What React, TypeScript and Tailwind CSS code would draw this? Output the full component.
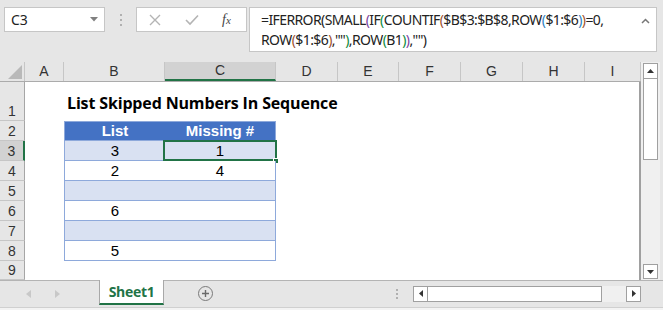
import React from "react";

const cols = [
  { l: "A", w: "w-[39px]" },
  { l: "B", w: "w-[101px]" },
  { l: "C", w: "w-[111px]" },
  { l: "D", w: "w-[62px]" },
  { l: "E", w: "w-[61px]" },
  { l: "F", w: "w-[62px]" },
  { l: "G", w: "w-[62px]" },
  { l: "H", w: "w-[62px]" },
  { l: "I", w: "w-[56px]" },
];

type TRow = { n: number; kind: "head" | "band" | "plain"; b: string; c: string };
const tableRows: TRow[] = [
  { n: 2, kind: "head", b: "List", c: "Missing #" },
  { n: 3, kind: "band", b: "3", c: "1" },
  { n: 4, kind: "plain", b: "2", c: "4" },
  { n: 5, kind: "band", b: "", c: "" },
  { n: 6, kind: "plain", b: "6", c: "" },
  { n: 7, kind: "band", b: "", c: "" },
  { n: 8, kind: "plain", b: "5", c: "" },
];

const P = ({ c, children }: { c: string; children: React.ReactNode }) => (
  <span className={c}>{children}</span>
);

function RowHead({ n, sel, h }: { n: number; sel?: boolean; h: string }) {
  return (
    <div
      className={
        sel
          ? `w-[25px] ${h} shrink-0 flex items-end justify-center pb-[0px] bg-[#d2d2d2] border-b border-[#c6c6c6] border-r-2 border-r-[#217346] text-[14px] leading-[18px] text-[#333]`
          : `w-[25px] ${h} shrink-0 flex items-end justify-center pb-[0px] bg-[#e6e6e6] border-b border-[#c6c6c6] border-r border-r-[#a6a6a6] text-[14px] leading-[18px] text-[#333]`
      }
    >
      {n}
    </div>
  );
}

function Filler() {
  return <div className="flex-1" />;
}

export default function App() {
  return (
    <div className="w-[663px] h-[310px] bg-[#e6e6e6] overflow-hidden flex flex-col font-['Liberation_Sans',Arial,sans-serif] text-[#000]">
      {/* toolbar */}
      <div className="h-[62px] shrink-0 flex items-start pt-[7px] pl-[4px]">
        <div className="w-[101px] h-[25px] bg-white border border-[#c6c6c6] flex items-center justify-between pl-[6px] pr-[6px]">
          <span className="text-[14px] text-[#222] font-['Noto_Sans',sans-serif]">C3</span>
          <svg width="8" height="5" viewBox="0 0 8 5">
            <polygon points="0,0 8,0 4,4.5" fill="#808080" />
          </svg>
        </div>
        <div className="w-[31px] h-[25px] flex flex-col items-center justify-center gap-[3px]">
          <div className="w-[2px] h-[2px] bg-[#b0b0b0]" />
          <div className="w-[2px] h-[2px] bg-[#b0b0b0]" />
          <div className="w-[2px] h-[2px] bg-[#b0b0b0]" />
        </div>
        <div className="w-[111px] h-[25px] bg-white border border-[#c6c6c6] flex items-center">
          <svg width="12" height="12" viewBox="0 0 12 12" className="ml-[12px]">
            <path d="M1 1 L11 11 M11 1 L1 11" stroke="#b4b4b4" strokeWidth="1.4" />
          </svg>
          <svg width="14" height="12" viewBox="0 0 14 12" className="ml-[24px]">
            <path d="M1 6 L5 10 L13 1.5" stroke="#b4b4b4" strokeWidth="1.6" fill="none" />
          </svg>
          <span className="ml-[23px] text-[14px] italic text-[#444] font-['Liberation_Serif',serif]">
            f<span className="text-[11px]">x</span>
          </span>
        </div>
        <div className="ml-[2px] w-[408px] h-[45px] bg-white border border-[#c6c6c6] flex justify-between pl-[11px] pr-[6px] pt-[2px]">
          <div className="text-[14px] leading-[20px] text-[#222] font-['Noto_Sans',sans-serif] tracking-[-0.6px]">
            <div>
              =IFERROR<P c="">(</P>SMALL<P c="text-[#7b3fa0]">(</P>IF<P c="text-[#0f8a3c]">(</P>COUNTIF<P c="text-[#a0522d]">(</P>$B$3:$B$8,ROW<P c="text-[#2d7fc1]">(</P>$1:$6<P c="text-[#2d7fc1]">)</P><P c="text-[#a0522d]">)</P>=0,
            </div>
            <div>
              ROW<P c="text-[#a0522d]">(</P>$1:$6<P c="text-[#a0522d]">)</P>,""<P c="text-[#0f8a3c]">)</P>,ROW<P c="text-[#0f8a3c]">(</P>B1<P c="text-[#0f8a3c]">)</P><P c="text-[#7b3fa0]">)</P>,""<P c="">)</P>
            </div>
          </div>
          <svg width="9" height="6" viewBox="0 0 9 6" className="mt-[8px]">
            <path d="M1 5 L4.5 1.5 L8 5" stroke="#777" strokeWidth="1.5" fill="none" />
          </svg>
        </div>
      </div>

      {/* grid + vertical scrollbar */}
      <div className="h-[218px] shrink-0 flex">
        <div className="w-[641px] shrink-0 flex flex-col">
          {/* column headers */}
          <div className="h-[20px] flex border-b border-[#ababab]">
            <div className="w-[25px] shrink-0 bg-[#e6e6e6] border-r border-[#c6c6c6] flex items-end justify-end pr-[2px] pb-[2px]">
              <svg width="14" height="14" viewBox="0 0 14 14">
                <polygon points="14,0 14,14 0,14" fill="#b9b9b9" />
              </svg>
            </div>
            {cols.map((c) =>
              c.l === "C" ? (
                <div
                  key={c.l}
                  className={`${c.w} shrink-0 bg-[#d2d2d2] border-r border-[#c6c6c6] border-b-2 border-b-[#217346] flex items-center justify-center text-[14px] text-[#333]`}
                >
                  {c.l}
                </div>
              ) : (
                <div
                  key={c.l}
                  className={`${c.w} shrink-0 bg-[#e6e6e6] border-r border-[#c6c6c6] flex items-center justify-center text-[14px] text-[#333]`}
                >
                  {c.l}
                </div>
              )
            )}
          </div>

          {/* row 1 */}
          <div className="h-[39px] flex">
            <RowHead n={1} h="h-[39px]" />
            <div className="flex-1 bg-white border-r-2 border-[#a0a0a0] flex items-end pl-[42px] pb-[8px]">
              <span className="text-[16px] font-bold leading-[20px] tracking-[-0.15px] font-['Open_Sans',sans-serif]">
                List Skipped Numbers In Sequence
              </span>
            </div>
          </div>

          {/* table rows */}
          {tableRows.map((r) => {
            const bg =
              r.kind === "head"
                ? "bg-[#4472c4] text-white font-bold"
                : r.kind === "band"
                ? "bg-[#d9e1f2]"
                : "bg-white";
            return (
              <div key={r.n} className="h-[20px] flex">
                <RowHead n={r.n} h="h-[20px]" sel={r.n === 3} />
                <div className="flex-1 bg-white border-r-2 border-[#a0a0a0] flex">
                  <div className="w-[39px] shrink-0" />
                  <div
                    className={`w-[101px] shrink-0 ${bg} border-l border-b border-[#8ea9db] ${r.kind === "head" ? "border-t" : ""} flex items-center justify-center text-[15px] leading-[18px]`}
                  >
                    {r.b}
                  </div>
                  <div
                    className={`relative w-[111px] shrink-0 ${bg} border-r border-b border-[#8ea9db] ${r.kind === "head" ? "border-t" : ""} flex items-center justify-center text-[15px] leading-[18px]`}
                  >
                    {r.c}
                    {r.n === 3 && (
                      <>
                        <div className="absolute left-[-2px] top-[-1px] right-[-2px] bottom-[-1px] border-2 border-[#217346]" />
                        <div className="absolute right-[-4px] bottom-[-4px] w-[6px] h-[6px] bg-[#217346] border border-white" />
                      </>
                    )}
                  </div>
                  <Filler />
                </div>
              </div>
            );
          })}

          {/* row 9 */}
          <div className="h-[19px] flex">
            <RowHead n={9} h="h-[19px]" />
            <div className="flex-1 bg-white border-r-2 border-[#a0a0a0]" />
          </div>
        </div>

        {/* vertical scrollbar */}
        <div className="w-[22px] shrink-0 flex">
          <div className="w-[19px] bg-[#f0f0f0] flex flex-col items-center pt-[1px] pb-[1px]">
            <div className="w-[15px] h-[16px] bg-white border border-[#a0a0a0] flex items-center justify-center">
              <svg width="7" height="4" viewBox="0 0 7 4">
                <polygon points="0,4 7,4 3.5,0" fill="#333" />
              </svg>
            </div>
            <div className="w-[15px] h-[82px] bg-white border border-[#a0a0a0] -mt-[1px]" />
            <div className="flex-1" />
            <div className="w-[15px] h-[15px] bg-white border border-[#a0a0a0] flex items-center justify-center">
              <svg width="7" height="4" viewBox="0 0 7 4">
                <polygon points="0,0 7,0 3.5,4" fill="#333" />
              </svg>
            </div>
          </div>
          <div className="flex-1 bg-[#e6e6e6]" />
        </div>
      </div>

      {/* tab bar */}
      <div className="h-[26px] shrink-0 flex items-stretch border-t border-[#b4b4b4] bg-[#e6e6e6]">
        <div className="w-[99px] shrink-0 flex items-center">
          <svg width="5" height="8" viewBox="0 0 5 8" className="ml-[26px]">
            <polygon points="5,0 5,8 0,4" fill="#c8c8c8" />
          </svg>
          <svg width="5" height="8" viewBox="0 0 5 8" className="ml-[24px]">
            <polygon points="0,0 0,8 5,4" fill="#c8c8c8" />
          </svg>
        </div>
        <div className="w-[65px] shrink-0 -mt-[1px] bg-white border-l border-r border-[#a8a8a8] border-b-2 border-b-[#217346] flex items-center justify-center mb-[1px]">
          <span className="text-[14px] font-bold text-[#217346] font-['Open_Sans',sans-serif] tracking-[-0.3px]">Sheet1</span>
        </div>
        <div className="w-[249px] shrink-0 flex items-center">
          <div className="ml-[34px] w-[15px] h-[15px] rounded-full border border-[#7a7a7a] flex items-center justify-center">
            <svg width="9" height="9" viewBox="0 0 9 9">
              <path d="M4.5 1 V8 M1 4.5 H8" stroke="#6a6a6a" strokeWidth="1.4" />
            </svg>
          </div>
          <div className="flex-1" />
          <div className="mr-[15px] flex flex-col gap-[2px]">
            <div className="w-[2px] h-[2px] bg-[#b0b0b0]" />
            <div className="w-[2px] h-[2px] bg-[#b0b0b0]" />
            <div className="w-[2px] h-[2px] bg-[#b0b0b0]" />
          </div>
        </div>
        <div className="w-[228px] shrink-0 flex items-center">
          <div className="w-[15px] h-[16px] bg-white border border-[#a0a0a0] flex items-center justify-center">
            <svg width="4" height="7" viewBox="0 0 4 7">
              <polygon points="4,0 4,7 0,3.5" fill="#333" />
            </svg>
          </div>
          <div className="w-[175px] h-[16px] bg-white border border-[#a0a0a0] -ml-[1px]" />
          <div className="flex-1 h-[16px] bg-[#f0f0f0]" />
          <div className="w-[15px] h-[16px] bg-white border border-[#a0a0a0] flex items-center justify-center">
            <svg width="4" height="7" viewBox="0 0 4 7">
              <polygon points="0,0 0,7 4,3.5" fill="#333" />
            </svg>
          </div>
        </div>
        <div className="flex-1" />
      </div>
      <div className="flex-1 flex flex-col">
        <div className="h-[1px]" />
        <div className="h-[1px] bg-[#d0d0d0]" />
        <div className="flex-1 bg-[#f3f3f3]" />
      </div>
    </div>
  );
}
